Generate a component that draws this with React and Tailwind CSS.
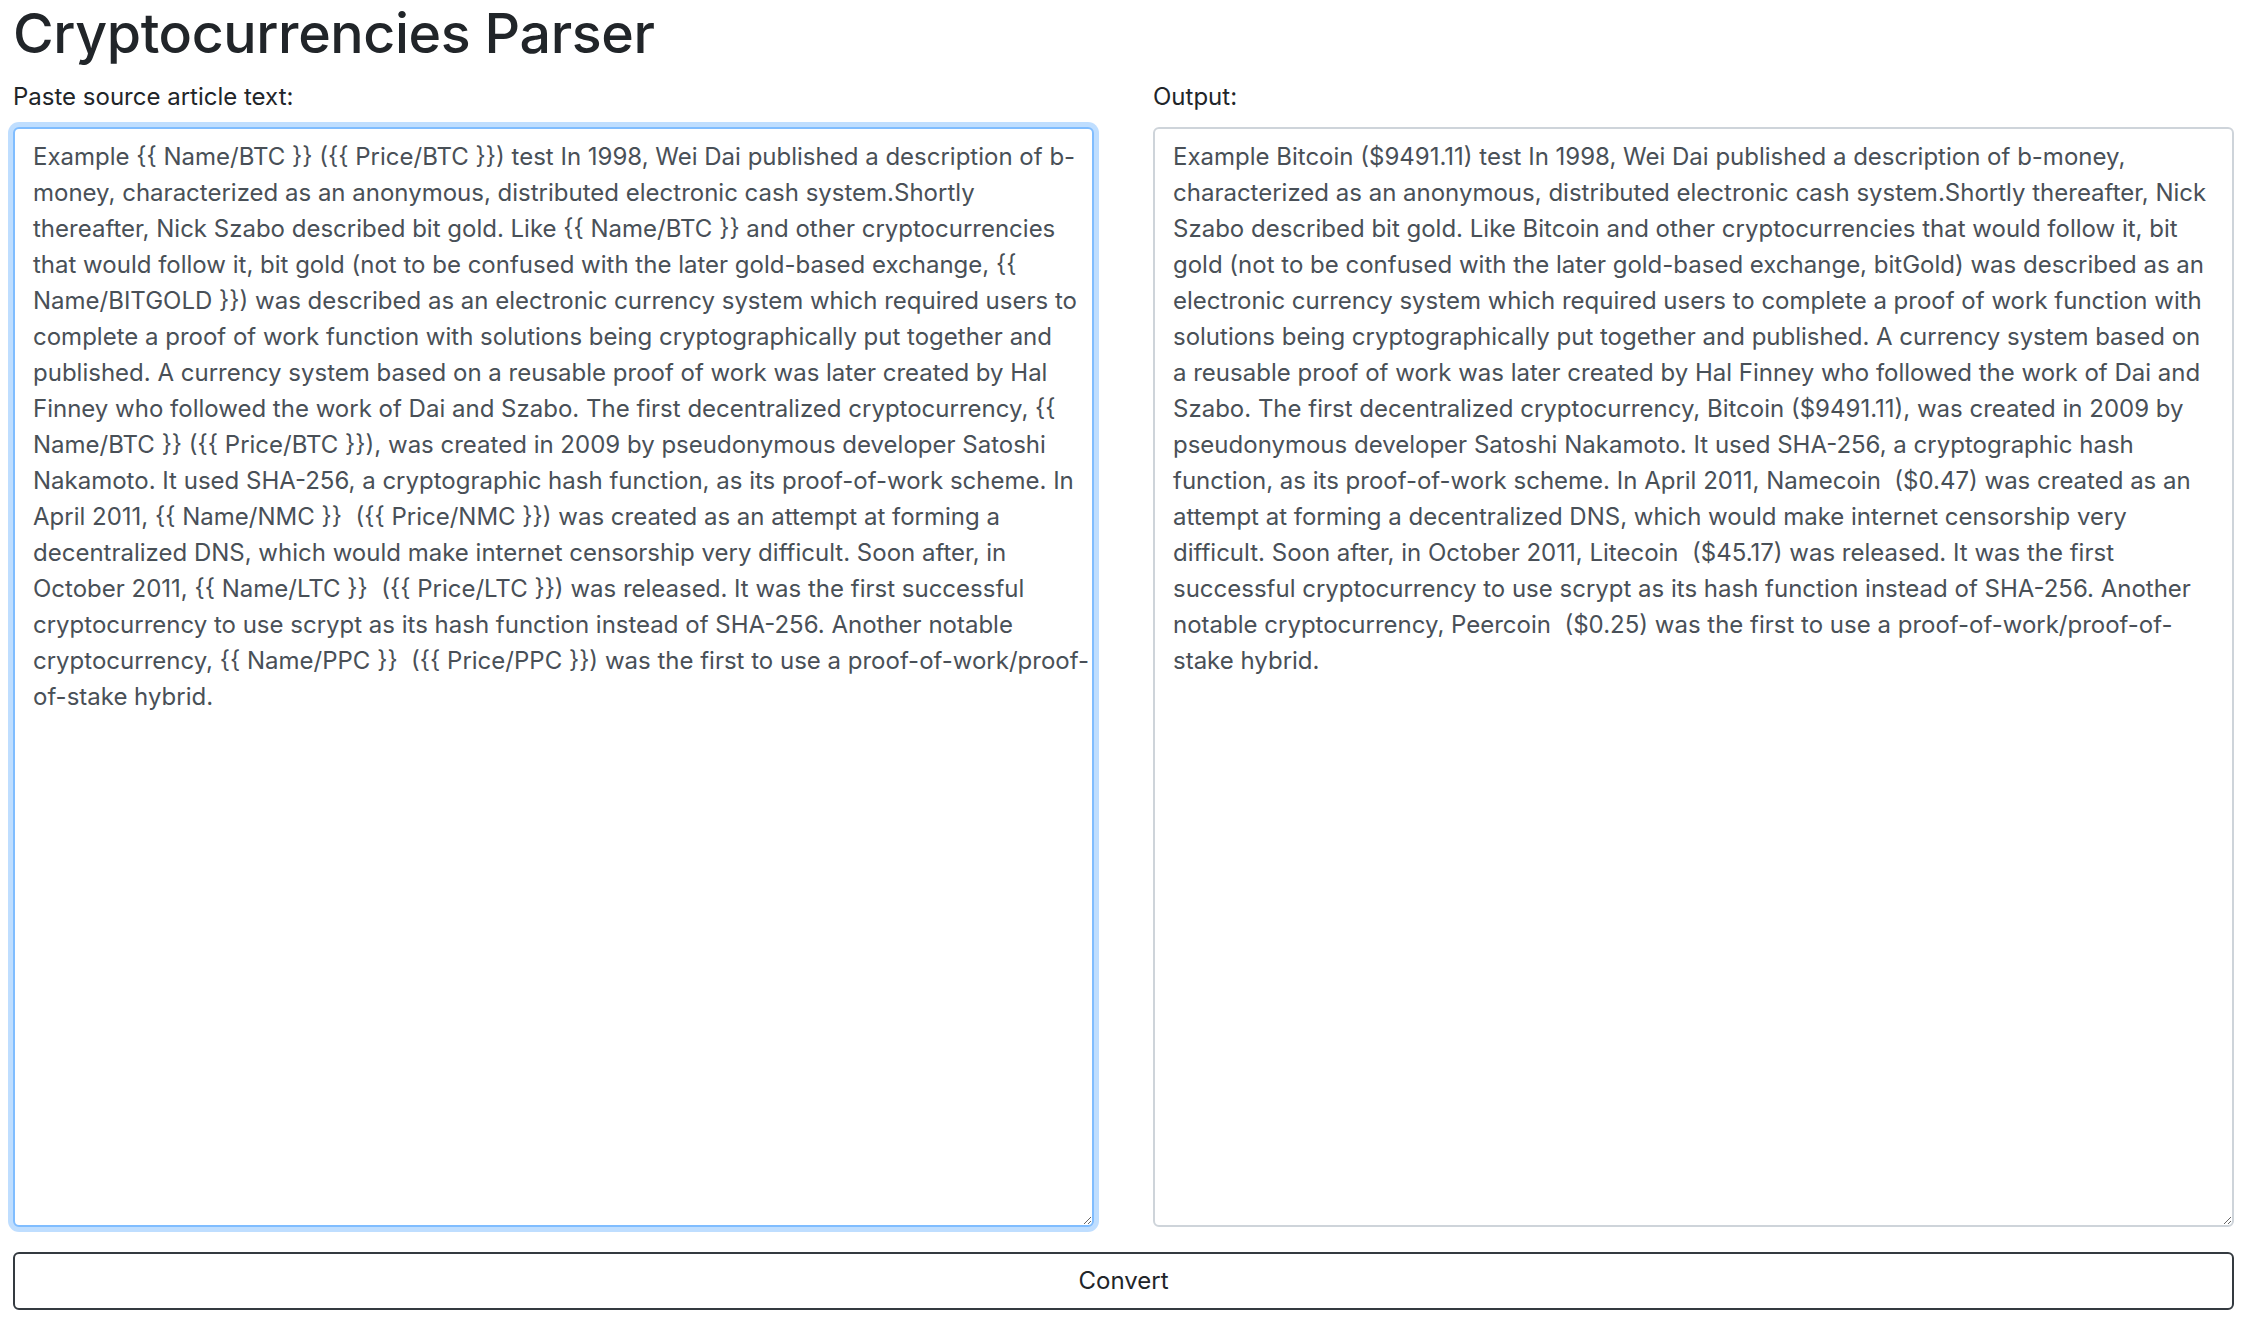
import { useState } from 'react'

const SOURCE =
  'Example {{ Name/BTC }} ({{ Price/BTC }}) test In 1998, Wei Dai published a description of b-money, characterized as an anonymous, distributed electronic cash system.Shortly thereafter, Nick Szabo described bit gold. Like {{ Name/BTC }} and other cryptocurrencies that would follow it, bit gold (not to be confused with the later gold-based exchange, {{ Name/BITGOLD }}) was described as an electronic currency system which required users to complete a proof of work function with solutions being cryptographically put together and published. A currency system based on a reusable proof of work was later created by Hal Finney who followed the work of Dai and Szabo. The first decentralized cryptocurrency, {{ Name/BTC }} ({{ Price/BTC }}), was created in 2009 by pseudonymous developer Satoshi Nakamoto. It used SHA-256, a cryptographic hash function, as its proof-of-work scheme. In April 2011, {{ Name/NMC }}  ({{ Price/NMC }}) was created as an attempt at forming a decentralized DNS, which would make internet censorship very difficult. Soon after, in October 2011, {{ Name/LTC }}  ({{ Price/LTC }}) was released. It was the first successful cryptocurrency to use scrypt as its hash function instead of SHA-256. Another notable cryptocurrency, {{ Name/PPC }}  ({{ Price/PPC }}) was the first to use a proof-of-work/proof-of-stake hybrid.'

const OUTPUT =
  'Example Bitcoin ($9491.11) test In 1998, Wei Dai published a description of b-money, characterized as an anonymous, distributed electronic cash system.Shortly thereafter, Nick Szabo described bit gold. Like Bitcoin and other cryptocurrencies that would follow it, bit gold (not to be confused with the later gold-based exchange, bitGold) was described as an electronic currency system which required users to complete a proof of work function with solutions being cryptographically put together and published. A currency system based on a reusable proof of work was later created by Hal Finney who followed the work of Dai and Szabo. The first decentralized cryptocurrency, Bitcoin ($9491.11), was created in 2009 by pseudonymous developer Satoshi Nakamoto. It used SHA-256, a cryptographic hash function, as its proof-of-work scheme. In April 2011, Namecoin  ($0.47) was created as an attempt at forming a decentralized DNS, which would make internet censorship very difficult. Soon after, in October 2011, Litecoin  ($45.17) was released. It was the first successful cryptocurrency to use scrypt as its hash function instead of SHA-256. Another notable cryptocurrency, Peercoin  ($0.25) was the first to use a proof-of-work/proof-of-stake hybrid.'

const font = { fontFamily: 'Inter, "Noto Sans", sans-serif' }

function Field({ label, value, onChange, focused }) {
  return (
    <div className="flex flex-col">
      <label className="text-[24px] leading-[36px] text-[#212529] mb-[12px]">{label}</label>
      <textarea
        value={value}
        onChange={onChange}
        spellCheck={false}
        className={
          focused
            ? 'h-[1100px] w-full rounded-[6px] border-2 border-[#80bdff] bg-white pl-[18px] pr-0 pt-[10px] pb-[9px] text-[24px] leading-[36px] text-[#495057] shadow-[0_0_0_5px_rgba(0,123,255,0.25)] outline-none'
            : 'h-[1100px] w-full rounded-[6px] border-2 border-[#ced4da] bg-white px-[18px] pt-[10px] pb-[9px] text-[24px] leading-[36px] text-[#495057] outline-none'
        }
        style={font}
      />
    </div>
  )
}

export default function App() {
  const [source, setSource] = useState(SOURCE)

  return (
    <div className="min-h-screen bg-white pl-[13px] pr-[20px]" style={font}>
      <h1 className="text-[55.5px] leading-[66px] font-medium text-[#212529] tracking-[-0.4px]">
        Cryptocurrencies Parser
      </h1>
      <div className="grid grid-cols-2 gap-[59px] mt-[13px]">
        <Field
          label="Paste source article text:"
          value={source}
          onChange={e => setSource(e.target.value)}
          focused
        />
        <Field label="Output:" value={OUTPUT} onChange={() => {}} />
      </div>
      <button className="mt-[25px] w-full h-[58px] rounded-[6px] border-2 border-[#343a40] bg-white text-[24px] leading-[36px] text-[#212529]">
        Convert
      </button>
    </div>
  )
}
